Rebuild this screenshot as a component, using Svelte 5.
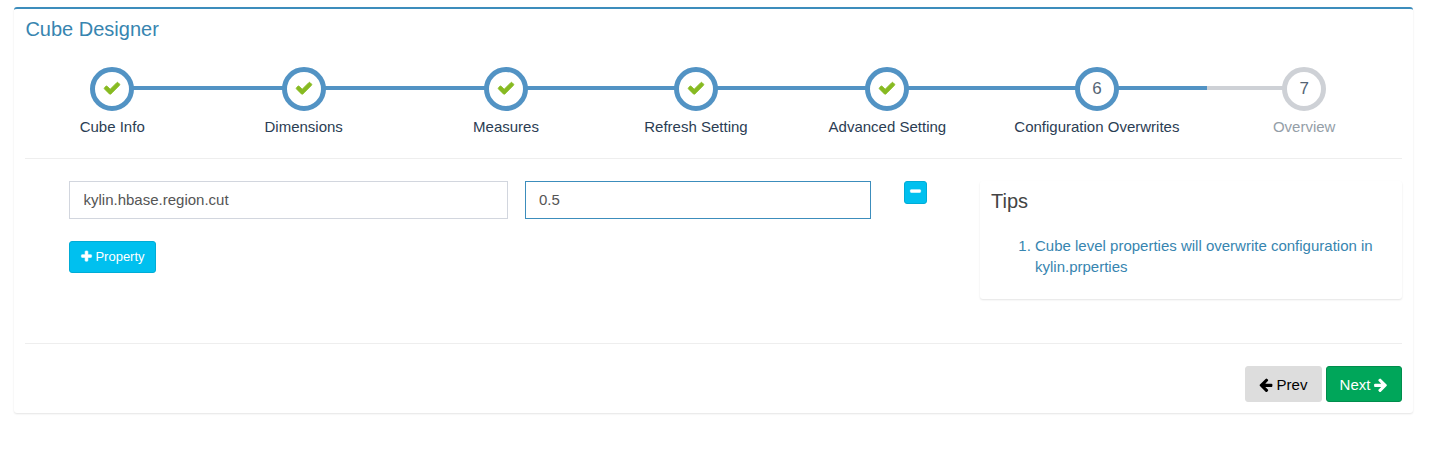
<script>
  const steps = [
    { title: 'Cube Info', state: 'complete' },
    { title: 'Dimensions', state: 'complete' },
    { title: 'Measures', state: 'complete' },
    { title: 'Refresh Setting', state: 'complete' },
    { title: 'Advanced Setting', state: 'complete' },
    { title: 'Configuration Overwrites', state: 'active' },
    { title: 'Overview', state: '' }
  ];
  const icons = {
    check: 'M1671 566q0 40-28 68l-724 724-136 136q-28 28-68 28t-68-28l-136-136-362-362q-28-28-28-68t28-68l136-136q28-28 68-28t68 28l294 295 656-657q28-28 68-28t68 28l136 136q28 28 28 68z',
    plus: 'M1600 736v192q0 40-28 68t-68 28h-416v416q0 40-28 68t-68 28h-192q-40 0-68-28t-28-68v-416h-416q-40 0-68-28t-28-68v-192q0-40 28-68t68-28h416v-416q0-40 28-68t68-28h192q40 0 68 28t28 68v416h416q40 0 68 28t28 68z',
    minus: 'M1600 736v192q0 40-28 68t-68 28h-1216q-40 0-68-28t-28-68v-192q0-40 28-68t68-28h1216q40 0 68 28t28 68z',
    arrow: 'M1664 896v128q0 53-32.5 90.5t-84.5 37.5h-704l293 294q38 36 38 90t-38 90l-75 76q-37 37-90 37-52 0-91-37l-651-652q-37-37-37-90 0-52 37-91l651-650q38-38 91-38 52 0 90 38l75 74q38 38 38 91t-38 91l-293 293h704q52 0 84.5 37.5t32.5 90.5z'
  };
  let key = $state('kylin.hbase.region.cut');
  let value = $state('0.5');
</script>

{#snippet icon(name, cls)}
  <svg class={cls} viewBox="0 0 1792 1792" aria-hidden="true"><path d={icons[name]} /></svg>
{/snippet}

<main>
<section class="box">
  <h4>Cube Designer</h4>
  <ul class="steps">
    {#each steps as step, i}
      <li class={step.state}>
        <span class="circle">
          {#if step.state === 'complete'}{@render icon('check', 'check')}{:else}{i + 1}{/if}
        </span>
        <span class="title">{step.title}</span>
      </li>
    {/each}
  </ul>
  <hr />
  <div class="content">
    <div class="form">
      <div class="row">
        <input class="key" bind:value={key} />
        <input class="value" bind:value />
        <button class="btn info remove">{@render icon('minus', 'small')}</button>
      </div>
      <button class="btn info add">{@render icon('plus', 'small')}<span>Property</span></button>
    </div>
    <aside class="tips">
      <h4>Tips</h4>
      <ol><li>Cube level properties will overwrite configuration in kylin.prperties</li></ol>
    </aside>
  </div>
  <hr />
  <footer>
    <button class="btn prev">{@render icon('arrow', 'arrow')}<span>Prev</span></button>
    <button class="btn next"><span>Next</span>{@render icon('arrow', 'arrow right')}</button>
  </footer>
</section>
</main>

<style>
  :global(body) { margin: 0; background: #fff; }
  main { height: 456px; padding: 7px 0 0 14px; box-sizing: border-box; background: #fff; }
  .box, .box * { box-sizing: border-box; }
  .box {
    width: 1399px;
    height: 406px;
    padding: 0 11px;
    display: flow-root;
    background: #fff;
    border-top: 2px solid #3c8dbc;
    border-radius: 3px;
    box-shadow: 0 1px 2px rgba(0, 0, 0, 0.11);
    font: 15px/21px "Liberation Sans", Arial, sans-serif;
    color: #333;
  }
  h4 { margin: 0; font-size: 20px; line-height: 22px; font-weight: 400; color: #3785b0; }
  .box > h4 { margin-top: 9px; padding-left: 0.4px; }
  .steps {
    display: grid;
    grid-template-columns: 174.4px 208.6px 196px 184px 198.8px 220.2px 194.4px;
    list-style: none;
    margin: 27px 0 0;
    padding: 0;
  }
  .steps li {
    position: relative;
    display: flex;
    flex-direction: column;
    align-items: center;
    color: #2b3d53;
  }
  .steps li::before {
    content: "";
    position: absolute;
    top: 19px;
    left: 0;
    width: 100%;
    height: 4px;
    background: #ced1d6;
  }
  .steps li:first-child::before { left: 50%; width: 50%; }
  .steps li:last-child::before { width: 50%; }
  .steps .complete::before, .steps .active::before { background: #5293c4; }
  .circle {
    position: relative;
    width: 44px;
    height: 44px;
    display: flex;
    align-items: center;
    justify-content: center;
    border: 5px solid #ced1d6;
    border-radius: 50%;
    background: #fff;
    color: #546474;
    font-size: 17px;
    line-height: 30px;
  }
  .complete .circle, .active .circle { border-color: #5293c4; }
  .title { margin-top: 5px; white-space: nowrap; }
  .steps li:last-child .title { color: #949ea7; }
  svg { display: block; fill: currentColor; }
  .check { width: 18px; height: 18px; margin-top: -2px; color: #87ba21; stroke: currentColor; stroke-width: 80; }
  hr { height: 1px; margin: 21px 0 22px; border: 0; background: #eee; }
  .content { display: flex; justify-content: space-between; height: 141px; }
  .form { padding-left: 44px; }
  .row { display: flex; align-items: flex-start; }
  input {
    height: 38px;
    margin: 0;
    padding: 5px 13px 7px;
    border: 1px solid #d2d6de;
    border-radius: 0;
    outline: 0;
    background: #fff;
    color: #555;
    font: inherit;
  }
  .key { width: 439px; padding-left: 13.5px; }
  .value { width: 346px; margin-left: 17px; border-color: #3c8dbc; }
  .btn {
    display: flex;
    align-items: center;
    justify-content: center;
    gap: 4px;
    margin: 0;
    padding: 0;
    border: 1px solid transparent;
    border-radius: 3px;
    font: inherit;
  }
  .info { color: #fff; background: #00c0ef; border-color: #00acd6; }
  .remove { width: 23px; height: 23px; margin-left: 33px; padding-bottom: 1px; }
  .add { width: 87px; height: 32px; margin-top: 22px; padding-bottom: 1px; gap: 2px; font-size: 13px; }
  .small { width: 13px; height: 13px; }
  .add .small { margin-top: -1px; }
  .small path { stroke: currentColor; stroke-width: 80; }
  .remove .small { margin-top: -0.5px; }
  .tips {
    width: 422px;
    height: 118px;
    padding: 9px 11px;
    border-radius: 3px;
    box-shadow: 0 1px 2px rgba(0, 0, 0, 0.11);
  }
  .tips h4 { color: #444; }
  ol { margin: 23px 0 0; padding-left: 44px; color: #3785b0; }
  footer { display: flex; justify-content: flex-end; gap: 4px; }
  footer .btn { height: 36px; }
  .prev { width: 77px; padding-right: 1px; background: #ddd; border-color: #ddd; color: #000; }
  .prev, .next { gap: 3px; }
  .next { width: 76px; background: #00a65a; border-color: #008d4c; color: #fff; }
  .arrow { width: 15.5px; height: 15.5px; margin: 1px 0 0 -0.5px; }
  .arrow.right { margin: 1px -0.5px 0 0; transform: scaleX(-1); }
</style>
